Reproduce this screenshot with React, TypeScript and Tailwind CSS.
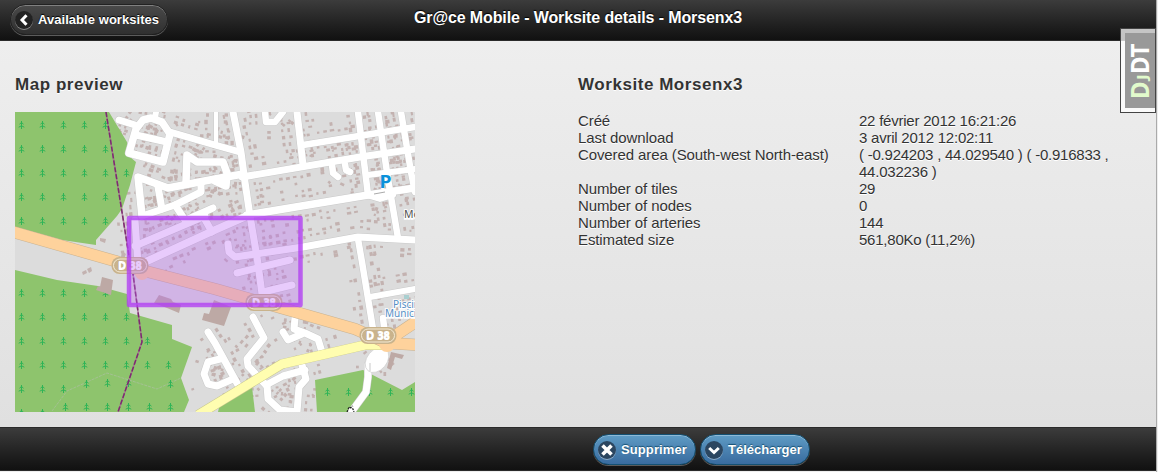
import React from "react";

type Pt = [number, number];
type Road = { w: number; p: Pt[] };

const roads: Road[] = [
  { w: 7, p: [[104, 8], [120, 13]] },
  { w: 7.5, p: [[114, 41], [121, 17], [128, 8], [136, 6], [147, 10], [155, 22], [148, 50], [114, 41]] },
  { w: 7, p: [[121, 23], [152, 30]] },
  { w: 7, p: [[155, 20], [200, 33], [225, 40]] },
  { w: 6, p: [[141, 0], [140, 6]] },
  { w: 7.5, p: [[127, 104], [123, 65], [153, 76], [200, 67], [228, 62]] },
  { w: 7, p: [[143, 75], [147, 97]] },
  { w: 7, p: [[127, 104], [160, 93], [186, 80], [186, 71]] },
  { w: 7, p: [[160, 93], [170, 108]] },
  { w: 7.5, p: [[171, 70], [172, 43], [182, 50], [208, 50], [212, 61], [211, 74], [200, 69]] },
  { w: 7, p: [[171, 108], [198, 96]] },
  { w: 7, p: [[120, 134], [190, 104]] },
  { w: 7, p: [[120, 108], [123, 152]] },
  { w: 7.5, p: [[128, 151], [200, 118], [234, 103]] },
  { w: 7, p: [[188, 104], [197, 120]] },
  { w: 7, p: [[218, 0], [226, 40], [230, 70], [235, 104], [242, 145], [247, 182]] },
  { w: 7, p: [[227, 65], [345, 45], [400, 37]] },
  { w: 6.5, p: [[288, 33], [400, 15]] },
  { w: 7, p: [[282, 0], [288, 53]] },
  { w: 6.5, p: [[343, 0], [353, 83]] },
  { w: 6.5, p: [[363, 0], [373, 67], [383, 126]] },
  { w: 6.5, p: [[386, 0], [396, 60], [400, 80]] },
  { w: 7.5, p: [[232, 103], [353, 83], [400, 76]] },
  { w: 6, p: [[355, 84], [365, 87], [378, 83]] },
  { w: 7, p: [[213, 132], [214, 140], [220, 145], [288, 135], [343, 125], [400, 128]] },
  { w: 6.5, p: [[343, 127], [347, 150], [358, 217]] },
  { w: 6, p: [[353, 63], [400, 57]] },
  { w: 6.5, p: [[317, 53], [318, 61], [323, 65]] },
  { w: 6.5, p: [[330, 52], [331, 58], [335, 60]] },
  { w: 6.5, p: [[250, 0], [251, 10], [260, 10], [268, 0]] },
  { w: 4, p: [[201, 0], [201, 32]] },
  { w: 7, p: [[222, 161], [250, 154], [275, 148]] },
  { w: 7, p: [[248, 180], [277, 173]] },
  { w: 6, p: [[355, 185], [400, 177]] },
  { w: 7, p: [[238, 205], [249, 226], [232, 247], [233, 254], [251, 273], [268, 264], [290, 258]] },
  { w: 7, p: [[252, 273], [253, 287], [265, 298], [282, 300], [284, 275], [291, 267], [287, 253]] },
  { w: 7, p: [[280, 206], [279, 217], [290, 221], [303, 227], [307, 240]] },
  { w: 7, p: [[268, 220], [273, 228], [287, 222]] },
  { w: 7, p: [[193, 220], [200, 231], [223, 273]] },
  { w: 7, p: [[205, 247], [193, 250], [189, 262], [193, 272], [202, 274], [218, 267]] },
  { w: 6.5, p: [[368, 206], [370, 222]] },
  { w: 7, p: [[370, 238], [353, 252], [353, 265], [351, 280], [337, 299]] },
];

const toPath = (p: Pt[]) => "M" + p.map(([x, y]) => `${x} ${y}`).join("L");

const makeRandom = (seed: number) => () => {
  seed = (seed * 1664525 + 1013904223) % 4294967296;
  return seed / 4294967296;
};

// Houses follow both sides of every street.
const houses = (() => {
  const rnd = makeRandom(77);
  const out: { x: number; y: number; a: number; w: number; h: number }[] = [];
  roads.forEach(({ p }) => {
    for (let i = 1; i < p.length; i++) {
      const dx = p[i][0] - p[i - 1][0];
      const dy = p[i][1] - p[i - 1][1];
      const len = Math.hypot(dx, dy);
      for (let d = 3; d < len; d += 7) {
        [-1, 1].forEach((side) => {
          [8, 14].forEach((base) => {
            if (rnd() < (base === 8 ? 0.3 : 0.55)) return;
            const off = side * (base + rnd() * 3);
            out.push({
              x: p[i - 1][0] + (dx * d) / len - (dy / len) * off,
              y: p[i - 1][1] + (dy * d) / len + (dx / len) * off,
              a: (Math.atan2(dy, dx) * 180) / Math.PI,
              w: 2 + rnd() * 2.5,
              h: 2 + rnd() * 1.6,
            });
          });
        });
      }
    }
  });
  return out;
})();

const range = (n: number) => Array.from({ length: n }, (_, i) => i);
const trees: Pt[] = [
  ...[13, 37, 61, 85, 109].flatMap((y) =>
    range(6).map((i) => [6.5 + i * 21, y] as Pt).filter(([x]) => x < 100 || y === 61),
  ),
  ...range(5).map((i) => [6.5 + i * 21, 181] as Pt),
  ...range(6).map((i) => [6.5 + i * 21, 205] as Pt),
  ...range(7).map((i) => [6.5 + i * 21, 229] as Pt),
  ...range(8).map((i) => [6.5 + i * 21, 253] as Pt),
  ...range(3).map((i) => [6.5 + i * 21, 277] as Pt),
  ...([[71.5, 272], [92.5, 271], [113.5, 271], [155.5, 272]] as Pt[]),
  ...range(6).map((i) => [50.5 + i * 21, 295] as Pt),
  ...([[6.5, 301], [27.5, 301], [312.5, 280], [333.5, 280], [354.5, 280], [375.5, 280], [396.5, 280]] as Pt[]),
];

const Shield = ({ x, y }: { x: number; y: number }) => (
  <g>
    <rect x={x - 18.5} y={y - 8.5} width="37" height="17" rx="8" fill="#c9b38c" />
    <rect x={x - 16.5} y={y - 6.5} width="33" height="13" rx="6.5" fill="#c9b38c" stroke="#f3ead5" strokeWidth="1" />
    <text x={x - 12} y={y + 3.7} fontFamily="Noto Sans, sans-serif" fontWeight="bold" fontSize="10.5" textLength="24" lengthAdjust="spacingAndGlyphs" fill="#fff">
      D 38
    </text>
  </g>
);

const MapPreview = () => (
  <svg width="400" height="300" viewBox="0 0 400 300" className="block overflow-hidden">
    <rect width="400" height="300" fill="#dcdcdc" />
    <g fill="#c3b2b0">
      {houses.map((b, i) => (
        <rect key={i} x={-b.w / 2} y={-b.h / 2} width={b.w} height={b.h} transform={`translate(${b.x.toFixed(1)} ${b.y.toFixed(1)}) rotate(${b.a.toFixed(1)})`} />
      ))}
      <path d="M67 160l4-2 1 3-4 2zM72 157l4-2 1 4-3 2zM85 126l6 1-1 4-5-2zM107 139l4 3-2 5-3-2z" />
    </g>
    <g fill="#8ec46d">
      <path d="M0 0H94L112 30L115 45L121 50L115 73L107 97L102 104L81 128V133L47 128L0 115Z" />
      <path d="M0 158L42 168L83 174L112 182L115 201L157 213V227L177 235L166 266L174 288L169 300H0Z" />
      <path d="M300 268L348 258L387 278L400 270V300H302Z" />
      <path d="M203 300L205 291L237 275L240 300Z" />
    </g>
    <path d="M37 299L52 279L92 261L142 277L166 266" fill="none" stroke="#aebfa3" strokeWidth=".7" strokeDasharray="3 1" />
    <g stroke="#2fb457" fill="none" strokeWidth="1">
      {trees.map(([x, y], i) => (
        <path key={i} d={`M${x} ${y - 4}V${y + 4}M${x - 2} ${y - 0.8}L${x} ${y - 2.5}L${x + 2} ${y - 0.8}M${x - 2.8} ${y + 2.2}L${x} ${y + 0.8}L${x + 2.8} ${y + 2.2}`} />
      ))}
    </g>
    <g fill="#bda9a5">
      <path d="M87 165l11 3-2 15-15-5 2-4 2 1zM144 183l12 4 2 3 8 3-2 8-12-5-13-5zM199 188l17 7-7 19-22-6 2-7 5 1zM376 240l13 3-2 4-7-2-4 13-4-2z" />
    </g>
    <g fill="none" strokeLinecap="round" strokeLinejoin="round">
      {roads.map((r, i) => <path key={i} d={toPath(r.p)} stroke="#c9c9c9" strokeWidth={r.w + 1} />)}
      {roads.map((r, i) => <path key={i} d={toPath(r.p)} stroke="#fff" strokeWidth={r.w} />)}
    </g>
    <ellipse cx="362" cy="248" rx="10" ry="14" transform="rotate(40 362 248)" fill="#fff" stroke="#cfcfcf" strokeWidth=".7" />
    <path d="M355 251v8" stroke="#c9c9c9" strokeWidth="1" />
    <path d="M359 82l11-2" stroke="#aaa" strokeWidth="1" />
    <g fill="none" strokeLinejoin="round">
      <path d="M183 303L267 252L350 233H370" stroke="#c8c88c" strokeWidth="10" />
      <path d="M183 303L267 252L350 233H370" stroke="#fffdb0" strokeWidth="9" />
      <path d="M-5 119L100 149L122 157L200 177L277 199L340 217L372 231L405 233M372 229L405 207" stroke="#c9b290" strokeWidth="12" />
      <circle cx="127" cy="161" r="7" fill="#fed29c" />
      <circle cx="372" cy="232" r="8" fill="#fed29c" />
      <path d="M-5 119L100 149L122 157L200 177L277 199L340 217L372 231L405 233M372 229L405 207" stroke="#fed29c" strokeWidth="11" />
    </g>
    <path d="M91 0L115 150L118 162L127 230L103 300" fill="none" stroke="#a76a91" strokeWidth="1.6" opacity=".75" />
    <path d="M91 0L115 150L118 162L127 230L103 300" fill="none" stroke="#7c2c70" strokeWidth="1.5" strokeDasharray="5 2" />
    <Shield x={115} y={153.5} />
    <Shield x={249} y={190.5} />
    <Shield x={363} y={223.5} />
    <text x="364.5" y="76" fontFamily="Noto Sans, DejaVu Sans, sans-serif" fontWeight="bold" fontSize="17" textLength="12" lengthAdjust="spacingAndGlyphs" fill="#0a91da">P</text>
    <g fontFamily="Noto Sans, sans-serif" fontSize="10" stroke="#fff" strokeWidth="2" paintOrder="stroke" strokeOpacity=".8">
      <text x="389" y="106" fill="#555" fontSize="10.5">Mo</text>
      <text x="378" y="195.5" fill="#558fc5">Piscin</text>
      <text x="370" y="204.5" fill="#558fc5">Municip</text>
    </g>
    <rect x="389" y="183" width="5" height="4" fill="#a9cfd0" />
    <path d="M332 300l2-5 4 2 1 3M335 296l3-2" fill="none" stroke="#222" strokeWidth="1.2" strokeDasharray="2 1" />
    <rect x="114" y="106" width="171.5" height="87" fill="#bb66f5" fillOpacity=".34" stroke="#b13df2" strokeOpacity=".78" strokeWidth="4.5" strokeLinejoin="round" />
  </svg>
);

const Glyph = ({ kind }: { kind: "left" | "cross" | "down" }) => (
  <span
    className={`grid size-[18px] place-items-center rounded-full shadow-[0_1px_0_rgba(255,255,255,0.4)] ${
      kind === "left" ? "bg-[#222]" : "bg-[#2b4660]"
    }`}
  >
    <svg width="18" height="18" viewBox="0 0 18 18" fill="none" stroke="#fff" strokeWidth="3">
      {kind === "left" && <path d="M11.5 4.2L7 9l4.5 4.8" />}
      {kind === "cross" && <path strokeWidth="3.6" d="M4.5 4.5l9 9M13.5 4.5l-9 9" />}
      {kind === "down" && <path d="M4.2 7L9 11.5L13.8 7" />}
    </svg>
  </span>
);

const BlueButton = ({ label, kind, width }: { label: string; kind: "cross" | "down"; width: string }) => (
  <button
    className={`flex h-[31px] items-center gap-[5px] rounded-full border border-[#145072] bg-linear-to-b from-[#5f9cc5] to-[#396b9e] pl-1 text-[13px] font-bold text-white shadow-[0_1px_0_rgba(255,255,255,0.3),inset_0_1px_0_rgba(255,255,255,0.3)] [text-shadow:0_-1px_1px_#145072] ${width}`}
  >
    <Glyph kind={kind} />
    {label}
  </button>
);

const details: [string, string][] = [
  ["Créé", "22 février 2012 16:21:26"],
  ["Last download", "3 avril 2012 12:02:11"],
  ["Covered area (South-west North-east)", "( -0.924203 , 44.029540 ) ( -0.916833 , 44.032236 )"],
  ["Number of tiles", "29"],
  ["Number of nodes", "0"],
  ["Number of arteries", "144"],
  ["Estimated size", "561,80Ko (11,2%)"],
];

export default function App() {
  return (
    <div className="relative flex h-[472px] w-[1158px] overflow-hidden bg-[#eee] font-['Liberation_Sans',Arial,sans-serif] text-[#333]">
      <div className="flex h-[471px] w-[1156px] flex-col">
        <header className="grid h-[41px] shrink-0 grid-cols-[1fr_auto_1fr] border-b border-[#2a2a2a] bg-linear-to-b from-[#3c3c3c] to-[#111] text-white">
          <button className="mt-[4px] ml-[10px] flex h-[31px] w-[158px] items-center gap-[5px] rounded-full border border-[#222] bg-linear-to-b from-[#4a4a4a] to-[#303030] pl-1 text-[13px] font-bold tracking-[0.05px] shadow-[0_1px_0_rgba(255,255,255,0.3),inset_0_1px_0_rgba(255,255,255,0.3)] [text-shadow:0_-1px_1px_#000]">
            <Glyph kind="left" />
            Available worksites
          </button>
          <h1 className="mt-[7px] text-[16px] leading-[21px] font-bold tracking-[-0.11px] [text-shadow:0_-1px_1px_#000]">
            Gr@ce Mobile - Worksite details - Morsenx3
          </h1>
        </header>

        <main className="grid min-h-0 flex-1 grid-cols-[563px_1fr] bg-linear-to-b from-[#eee] to-[#e0e0e0] pl-[15px] [text-shadow:0_1px_0_#fff]">
          <section>
            <h3 className="mt-[33px] mb-[17px] text-[17px] leading-[21px] font-bold tracking-[0.55px]">Map preview</h3>
            <MapPreview />
          </section>
          <section>
            <h3 className="mt-[33px] mb-[17px] text-[17px] leading-[21px] font-bold tracking-[0.55px]">Worksite Morsenx3</h3>
            <dl className="grid w-[563px] grid-cols-[281px_265px] text-[15px] leading-[17px]">
              {details.map(([label, value]) => (
                <React.Fragment key={label}>
                  <dt className="tracking-[-0.1px]">{label}</dt>
                  <dd className="tracking-[-0.23px]">{value}</dd>
                </React.Fragment>
              ))}
            </dl>
          </section>
        </main>

        <footer className="flex h-[44px] shrink-0 gap-[4px] border-y border-[#2a2a2a] bg-linear-to-b from-[#3c3c3c] to-[#111] pt-[6px] pl-[593px]">
          <BlueButton label="Supprimer" kind="cross" width="w-[103px] tracking-[0.1px]" />
          <BlueButton label="Télécharger" kind="down" width="w-[110px]" />
        </footer>
      </div>
      <div className="w-px bg-[#aaa]" />

      <div className="absolute top-[28px] left-[1120px] h-[85px] w-[36px] border border-[#444] bg-white/75 pt-[4px] pl-[4px]">
        <svg width="30" height="75" viewBox="0 0 30 75" className="block bg-[#999]">
          <g transform="translate(24 64) rotate(-90)" fontFamily="Noto Sans, sans-serif" fontWeight="700">
            <text x="-2" y="0" fontSize="25" textLength="17.5" lengthAdjust="spacingAndGlyphs" fill="#e2fbcc">D</text>
            <text x="17" y="-2" fontSize="15" textLength="6" lengthAdjust="spacingAndGlyphs" fill="#e2fbcc">J</text>
            <text x="23" y="0" fontSize="25" textLength="17.5" lengthAdjust="spacingAndGlyphs" fill="#fff">D</text>
            <text x="39.5" y="0" fontSize="25" textLength="14" lengthAdjust="spacingAndGlyphs" fill="#fff">T</text>
          </g>
        </svg>
      </div>
    </div>
  );
}
